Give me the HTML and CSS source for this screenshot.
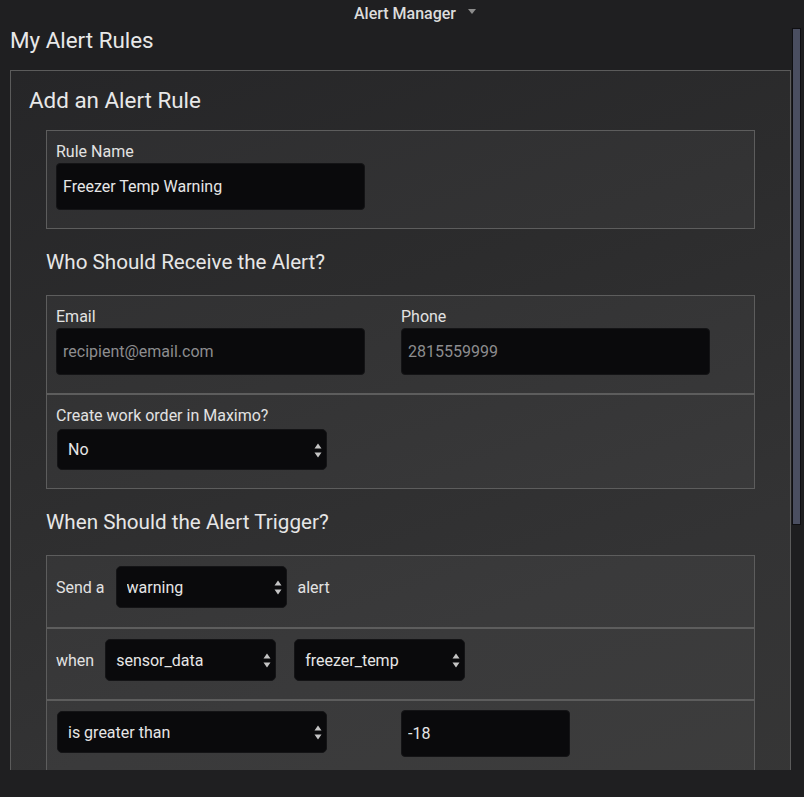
FILE: index.html
```html
<!DOCTYPE html>
<html lang="en">
<head>
<meta charset="utf-8">
<title>Alert Manager</title>
<link rel="stylesheet" href="styles.css">
</head>
<body>
<header class="topbar">
  <span class="topbar-title">Alert Manager</span>
  <svg class="topbar-caret" width="8" height="6" viewBox="0 0 8 6"><path d="M0 0H8L4 5Z" fill="#8c8c8c"/></svg>
</header>
<div class="viewport">
  <main class="content">
    <h1 class="page-title">My Alert Rules</h1>
    <section class="panel">
      <h2 class="panel-title">Add an Alert Rule</h2>
      <form class="form">
        <div class="box">
          <label class="label">Rule Name</label>
          <input class="input" type="text" value="Freezer Temp Warning">
        </div>

        <h3 class="section-title">Who Should Receive the Alert?</h3>
        <div class="box grid2">
          <div class="field">
            <label class="label">Email</label>
            <input class="input" type="text" placeholder="recipient@email.com">
          </div>
          <div class="field">
            <label class="label">Phone</label>
            <input class="input" type="text" placeholder="2815559999">
          </div>
        </div>
        <div class="box">
          <label class="label label-select">Create work order in Maximo?</label>
          <div class="select select-wide">
            <select><option>No</option></select>
            <svg class="spin" width="8" height="15" viewBox="0 0 8 15"><path d="M4 0.5L7.5 5.5H0.5Z M4 14.5L7.5 9.5H0.5Z" fill="#c4c4c4"/></svg>
          </div>
        </div>

        <h3 class="section-title">When Should the Alert Trigger?</h3>
        <div class="box row row-first">
          <span class="row-text">Send a</span>
          <div class="select select-narrow">
            <select><option>warning</option></select>
            <svg class="spin" width="8" height="15" viewBox="0 0 8 15"><path d="M4 0.5L7.5 5.5H0.5Z M4 14.5L7.5 9.5H0.5Z" fill="#c4c4c4"/></svg>
          </div>
          <span class="row-text after">alert</span>
        </div>
        <div class="box row">
          <span class="row-text">when</span>
          <div class="select select-narrow">
            <select><option>sensor_data</option></select>
            <svg class="spin" width="8" height="15" viewBox="0 0 8 15"><path d="M4 0.5L7.5 5.5H0.5Z M4 14.5L7.5 9.5H0.5Z" fill="#c4c4c4"/></svg>
          </div>
          <div class="select select-narrow pair">
            <select><option>freezer_temp</option></select>
            <svg class="spin" width="8" height="15" viewBox="0 0 8 15"><path d="M4 0.5L7.5 5.5H0.5Z M4 14.5L7.5 9.5H0.5Z" fill="#c4c4c4"/></svg>
          </div>
        </div>
        <div class="box grid2 row-last">
          <div class="field">
            <div class="select select-wide select-tall">
              <select><option>is greater than</option></select>
              <svg class="spin" width="8" height="15" viewBox="0 0 8 15"><path d="M4 0.5L7.5 5.5H0.5Z M4 14.5L7.5 9.5H0.5Z" fill="#c4c4c4"/></svg>
            </div>
          </div>
          <div class="field">
            <input class="input input-short" type="text" value="-18">
          </div>
        </div>
      </form>
    </section>
  </main>
  <div class="scrollbar"><div class="thumb"></div></div>
</div>
<footer class="bottombar"></footer>
</body>
</html>
```

FILE: styles.css
```css
* { box-sizing: border-box; }

html, body {
  margin: 0;
  padding: 0;
}

body {
  background: #1f1f21;
  font-family: Roboto, "Liberation Sans", sans-serif;
  color: #e4e4e4;
  width: 804px;
  height: 797px;
  overflow: hidden;
}

.topbar {
  height: 27px;
  display: flex;
  align-items: center;
  justify-content: center;
  padding-left: 26px;
  gap: 12px;
}

.topbar-title {
  font-size: 16px;
  font-weight: 500;
  line-height: 27px;
  color: #dcdcdc;
}

.topbar-caret {
  margin-top: -4px;
}

.viewport {
  height: 743px;
  display: flex;
  overflow: hidden;
}

.content {
  width: 791px;
  flex: none;
  padding-left: 10px;
}

.page-title {
  margin: 0 0 17px;
  font-size: 22.4px;
  line-height: 26px;
  font-weight: 400;
  color: #e8e8e8;
}

.panel {
  width: 781px;
  border: 1px solid #5b5b5b;
  border-bottom: none;
  padding: 15px 18px 40px;
  background: linear-gradient(160deg, #262628 0%, #2c2c2d 35%, #333334 70%, #363636 100%);
}

.panel-title {
  margin: 0 0 16px;
  font-size: 22.4px;
  line-height: 28px;
  font-weight: 400;
  color: #e8e8e8;
}

.form {
  margin: 0 17px;
}

.box {
  border: 1px solid #5d5d5d;
  background: rgba(255, 255, 255, 0.035);
  padding: 11px 9px 18px;
}

.label {
  display: block;
  font-size: 16px;
  line-height: 19px;
  margin-bottom: 2px;
  color: #e2e2e2;
}

.label-select {
  margin-bottom: 4px;
}

.input {
  display: block;
  width: 309px;
  height: 47px;
  border: 1px solid #141416;
  border-radius: 4px;
  background: #0a0a0c;
  color: #e6e6e6;
  font-family: Roboto, "Liberation Sans", sans-serif;
  font-size: 16px;
  padding: 0 6px;
  outline: none;
}

.input::placeholder {
  color: #8d8d8f;
  opacity: 1;
}

.input-short {
  width: 169px;
  margin-top: -1px;
}

.grid2 {
  display: grid;
  grid-template-columns: 345px 345px;
}

.section-title {
  margin: 21px 0;
  font-size: 20.65px;
  line-height: 24px;
  font-weight: 400;
  color: #e6e6e6;
}

.select {
  position: relative;
  height: 42px;
  margin-left: 1px;
}

.select select {
  appearance: none;
  -webkit-appearance: none;
  display: block;
  width: 100%;
  height: 100%;
  border: 1px solid #141416;
  border-radius: 5px;
  background: #0a0a0c;
  color: #e6e6e6;
  font-family: Roboto, "Liberation Sans", sans-serif;
  font-size: 16px;
  padding: 0 0 0 10px;
  outline: none;
}

.select .spin {
  position: absolute;
  right: 5px;
  top: 50%;
  margin-top: -7px;
}

.select-wide {
  width: 270px;
  height: 41px;
}

.select-tall {
  height: 42px;
}

.select-narrow {
  width: 171px;
  flex: none;
}

.row {
  display: flex;
  align-items: center;
  padding: 10px 9px 18px;
}

.row-first {
  padding-bottom: 19px;
}

.row-text {
  font-size: 16px;
  line-height: 19px;
  color: #e2e2e2;
  margin-right: 10px;
}

.row-text.after {
  margin-left: 11px;
}

.pair {
  margin-left: 18px;
}

.row-last {
  padding: 10px 9px 18px;
}

.scrollbar {
  width: 13px;
  flex: none;
  background: #1e1e20;
}

.thumb {
  margin: 1px 0 0 1px;
  width: 9px;
  height: 497px;
  background: #4a4e60;
  border: 1px solid #0f0f12;
}

.bottombar {
  height: 27px;
  background: #1f1f21;
}
```
